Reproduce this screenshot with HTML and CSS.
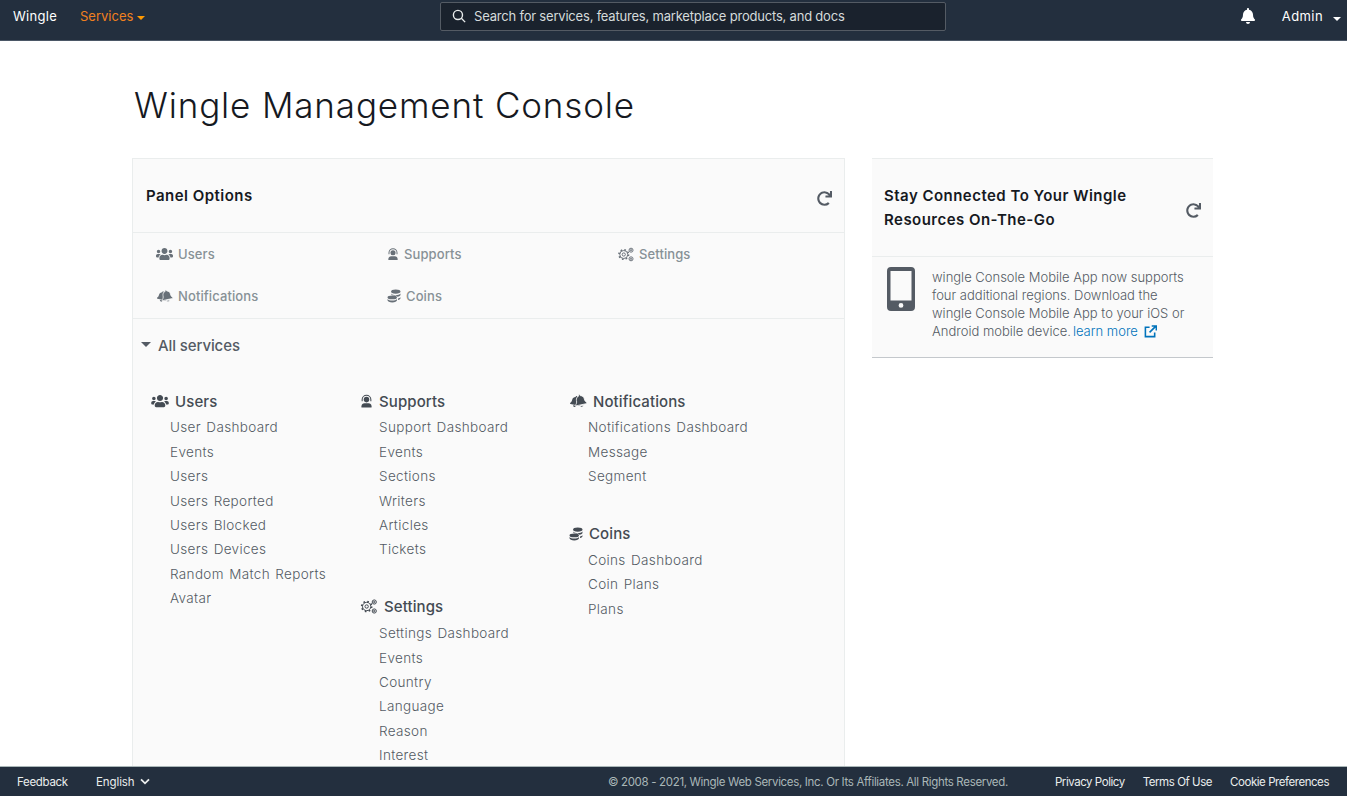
FILE: index.html
```html
<!DOCTYPE html>
<html lang="en">
<head>
    <meta charset="UTF-8">
    <meta name="viewport" content="width=device-width, initial-scale=1.0">
    <title>Wingle Management Console</title>
    <link rel="stylesheet" href="styles.css">
</head>
<body>
    <!-- Shared icons -->
    <svg class="icon-defs" aria-hidden="true">
        <symbol id="i-users" viewBox="0 0 640 512"><path d="M96 224c35.3 0 64-28.7 64-64s-28.7-64-64-64-64 28.7-64 64 28.7 64 64 64zm448 0c35.3 0 64-28.7 64-64s-28.7-64-64-64-64 28.7-64 64 28.7 64 64 64zm32 32h-64c-17.6 0-33.5 7.1-45.1 18.6 40.3 22.1 68.9 62 75.1 109.4h66c17.7 0 32-14.3 32-32v-32c0-35.3-28.7-64-64-64zm-256 0c61.9 0 112-50.1 112-112S381.9 32 320 32 208 82.1 208 144s50.1 112 112 112zm76.8 32h-8.3c-20.8 10-43.9 16-68.5 16s-47.6-6-68.5-16h-8.3C179.6 288 128 339.6 128 403.2V432c0 26.5 21.5 48 48 48h288c26.5 0 48-21.5 48-48v-28.8c0-63.6-51.6-115.2-115.2-115.2zm-223.7-13.4C161.5 263.1 145.6 256 128 256H64c-35.3 0-64 28.7-64 64v32c0 17.7 14.3 32 32 32h65.9c6.3-47.4 34.9-87.3 75.2-109.4z"/></symbol>
        <symbol id="i-bell" viewBox="0 0 448 512"><path d="M224 512c35.32 0 63.97-28.65 63.97-64H160.03c0 35.35 28.65 64 63.97 64zm215.39-149.71c-19.32-20.76-55.47-51.99-55.47-154.29 0-77.7-54.48-139.9-127.94-155.16V32c0-17.67-14.32-32-31.98-32s-31.98 14.33-31.98 32v20.84C118.56 68.1 64.08 130.3 64.08 208c0 102.3-36.15 133.53-55.47 154.29-6 6.45-8.66 14.16-8.61 21.71.11 16.4 12.98 32 32.1 32h383.8c19.12 0 32-15.6 32.1-32 .05-7.55-2.61-15.27-8.61-21.71z"/></symbol>
        <symbol id="i-redo" viewBox="0 0 512 512"><path d="M500.33 0h-47.41a12 12 0 0 0-12 12.57l4 82.76A247.42 247.42 0 0 0 256 8C119.34 8 7.9 119.53 8 256.19 8.1 393.07 119.1 504 256 504a247.1 247.1 0 0 0 166.18-63.91 12 12 0 0 0 .48-17.43l-34-34a12 12 0 0 0-16.38-.55A176 176 0 1 1 402.1 157.8l-101.53-4.87a12 12 0 0 0-12.57 12v47.41a12 12 0 0 0 12 12h200.33a12 12 0 0 0 12-12V12a12 12 0 0 0-12-12z"/></symbol>
        <symbol id="i-headset" viewBox="0 0 16 16">
            <path d="M8 0.3a6 6 0 0 0-6 6v2h1.300v-2a4.700 4.700 0 0 1 9.400 0v2H14v-2a6 6 0 0 0-6-6z"/>
            <circle cx="8" cy="6.300" r="3.400"/>
            <path d="M1.800 16v-1.400c0-2.200 1.700-3.700 3.700-3.700h5c2 0 3.700 1.500 3.700 3.700V16z"/>
        </symbol>
        <path id="i-bell-path" d="M224 512c35.32 0 63.97-28.65 63.97-64H160.03c0 35.35 28.65 64 63.97 64zm215.39-149.71c-19.32-20.76-55.47-51.99-55.47-154.29 0-77.7-54.48-139.9-127.94-155.16V32c0-17.67-14.32-32-31.98-32s-31.98 14.33-31.98 32v20.84C118.56 68.1 64.08 130.3 64.08 208c0 102.3-36.15 133.53-55.47 154.29-6 6.45-8.66 14.16-8.61 21.71.11 16.4 12.98 32 32.1 32h383.8c19.12 0 32-15.6 32.1-32 .05-7.55-2.61-15.27-8.61-21.71z"/>
        <symbol id="i-bells" viewBox="0 0 18 14">
            <g transform="translate(1.500 1.800) rotate(12 5 5.600) scale(.022)"><use href="#i-bell-path"/></g>
            <g transform="translate(6 0.400) rotate(-12 5.600 6.400) scale(.025)"><use href="#i-bell-path" stroke="#fafafa" stroke-width="30"/></g>
        </symbol>
        <symbol id="i-coins" viewBox="0 0 16 16">
            <ellipse cx="10" cy="2.900" rx="5.400" ry="2.400"/>
            <path d="M4.600 5.200c.9 1.200 3 1.800 5.400 1.800s4.500-.6 5.400-1.800v1.400c0 1-1.400 1.900-3.400 2.200-.8-.7-2.200-1.200-3.900-1.300-2.400-.2-3.500-.9-3.500-2.300z"/>
            <ellipse cx="6" cy="9.600" rx="5.400" ry="2.200"/>
            <path d="M.6 11.400c.9 1.200 3 1.800 5.400 1.800s4.500-.6 5.400-1.800v1.400c0 1.400-2.400 2.600-5.400 2.600S.6 14.200.6 12.800z"/>
            <path d="M12.600 10.800c1.300-.3 2.200-.8 2.800-1.500v1.400c0 .8-1 1.500-2.800 2z"/>
        </symbol>
        <symbol id="i-cogs" viewBox="0 0 20 18">
            <g fill="none" stroke="currentColor" stroke-width="1.200">
                <circle cx="7.200" cy="9" r="5"/>
                <circle cx="7.200" cy="9" r="6" stroke-dasharray="2 2.710" stroke-width="2"/>
                <circle cx="7.200" cy="9" r="2"/>
                <circle cx="16.300" cy="3.600" r="2.500"/>
                <circle cx="16.300" cy="3.600" r=".8"/>
                <circle cx="16.300" cy="14.400" r="2.500"/>
                <circle cx="16.300" cy="14.400" r=".8"/>
            </g>
        </symbol>
    </svg>

    <header class="topbar">
        <a class="brand">Wingle</a>
        <a class="services">Services<span class="caret"></span></a>
        <div class="search">
            <svg class="search-icon" viewBox="0 0 16 16"><circle cx="6.800" cy="6.800" r="5.200"/><path d="M10.700 10.700L15 15"/></svg>
            <span>Search for services, features, marketplace products, and docs</span>
        </div>
        <div class="topbar-right">
            <svg class="bell"><use href="#i-bell"/></svg>
            <a class="admin">Admin<span class="caret caret-white"></span></a>
        </div>
    </header>

    <main class="content">
        <h1 class="page-title">Wingle Management Console</h1>
        <div class="panels">
            <section class="panel panel-main">
                <div class="panel-head">
                    <h2>Panel Options</h2>
                    <svg class="refresh"><use href="#i-redo"/></svg>
                </div>
                <div class="options">
                    <div class="option"><svg class="ic ic-users"><use href="#i-users"/></svg>Users</div>
                    <div class="option"><svg class="ic ic-head"><use href="#i-headset"/></svg>Supports</div>
                    <div class="option"><svg class="ic ic-cogs"><use href="#i-cogs"/></svg>Settings</div>
                    <div class="option"><svg class="ic ic-users"><use href="#i-bells"/></svg>Notifications</div>
                    <div class="option"><svg class="ic ic-coins"><use href="#i-coins"/></svg>Coins</div>
                </div>
                <div class="all-services"><span class="caret caret-grey"></span>All services</div>
                <div class="services-grid">
                    <div class="service-col">
                        <div class="group">
                            <h3><svg class="ic ic-users"><use href="#i-users"/></svg>Users</h3>
                            <ul>
                                <li>User Dashboard</li>
                                <li>Events</li>
                                <li>Users</li>
                                <li>Users Reported</li>
                                <li>Users Blocked</li>
                                <li>Users Devices</li>
                                <li>Random Match Reports</li>
                                <li>Avatar</li>
                            </ul>
                        </div>
                    </div>
                    <div class="service-col">
                        <div class="group">
                            <h3><svg class="ic ic-head"><use href="#i-headset"/></svg>Supports</h3>
                            <ul>
                                <li>Support Dashboard</li>
                                <li>Events</li>
                                <li>Sections</li>
                                <li>Writers</li>
                                <li>Articles</li>
                                <li>Tickets</li>
                            </ul>
                        </div>
                        <div class="group">
                            <h3><svg class="ic ic-cogs"><use href="#i-cogs"/></svg>Settings</h3>
                            <ul>
                                <li>Settings Dashboard</li>
                                <li>Events</li>
                                <li>Country</li>
                                <li>Language</li>
                                <li>Reason</li>
                                <li>Interest</li>
                            </ul>
                        </div>
                    </div>
                    <div class="service-col">
                        <div class="group">
                            <h3><svg class="ic ic-users"><use href="#i-bells"/></svg>Notifications</h3>
                            <ul>
                                <li>Notifications Dashboard</li>
                                <li>Message</li>
                                <li>Segment</li>
                            </ul>
                        </div>
                        <div class="group">
                            <h3><svg class="ic ic-coins"><use href="#i-coins"/></svg>Coins</h3>
                            <ul>
                                <li>Coins Dashboard</li>
                                <li>Coin Plans</li>
                                <li>Plans</li>
                            </ul>
                        </div>
                    </div>
                </div>
            </section>

            <aside class="panel panel-side">
                <div class="side-head">
                    <h2>Stay Connected To Your Wingle<br>Resources On-The-Go</h2>
                    <svg class="refresh"><use href="#i-redo"/></svg>
                </div>
                <div class="side-body">
                    <svg class="phone" viewBox="0 0 28 44">
                        <path fill-rule="evenodd" d="M4 0h20a4 4 0 0 1 4 4v36a4 4 0 0 1-4 4H4a4 4 0 0 1-4-4V4a4 4 0 0 1 4-4zM3.500 4v29.500h21V4zM14 36a2.400 2.400 0 1 0 0 4.800 2.400 2.400 0 0 0 0-4.800z"/>
                    </svg>
                    <p>wingle Console Mobile App now supports<br>four additional regions. Download the<br>wingle Console Mobile App to your iOS or<br>Android mobile device.<a class="learn">learn more<svg class="ext" viewBox="0 0 14 14"><path d="M6 2.500H1.500v10h10V8"/><path d="M6 8l6.500-6.500M8.300 1h5v5" /></svg></a></p>
                </div>
            </aside>
        </div>
    </main>

    <footer class="footer">
        <a class="feedback">Feedback</a>
        <a class="lang">English<svg class="chev" viewBox="0 0 10 7"><path d="M1 1.300l4 4 4-4"/></svg></a>
        <span class="copy">© 2008 - 2021, Wingle Web Services, Inc. Or Its Affiliates. All Rights Reserved.</span>
        <div class="footer-links">
            <a>Privacy Policy</a>
            <a>Terms Of Use</a>
            <a>Cookie Preferences</a>
        </div>
    </footer>
</body>
</html>
```

FILE: styles.css
```css
/* General Page Styles */
* {
    box-sizing: border-box;
}

html, body {
    height: 100%;
}

body {
    margin: 0;
    display: flex;
    flex-direction: column;
    overflow: hidden;
    font-family: Inter, 'Noto Sans', sans-serif;
    background: #fff;
    color: #545b64;
}

h1, h2, h3, p, ul {
    margin: 0;
    padding: 0;
}

ul {
    list-style: none;
}

.icon-defs {
    display: none;
}

svg {
    fill: currentColor;
    flex: none;
}

/* Top Bar */
.topbar {
    flex: none;
    height: 41px;
    display: flex;
    align-items: center;
    padding: 0 6px 8px 13px;
    background: #232f3e;
    border-bottom: 1px solid #4b5766;
    color: #fff;
    font-size: 13px;
}

.brand {
    width: 67px;
    letter-spacing: 0.3px;
}

.services {
    color: #f0801f;
    width: 360px;
    display: flex;
    align-items: center;
}

.caret {
    display: inline-block;
    margin-left: 4px;
    margin-top: 3px;
    border-style: solid;
    border-width: 4px 4px 0;
    border-color: #ff9900 transparent transparent;
}

.caret-white {
    border-top-color: #fff;
    margin-left: 10px;
    margin-top: 6px;
}

.caret-grey {
    border-width: 5px 5px 0;
    border-top-color: #545b64;
    margin: 0 7px 0 0;
    position: relative;
    top: -1px;
}

.search {
    width: 506px;
    height: 29px;
    display: flex;
    align-items: center;
    gap: 8px;
    padding-left: 11px;
    background: #1a222d;
    border: 1px solid #545b64;
    border-radius: 2px;
    color: #d5dbdb;
    font-size: 13px;
    letter-spacing: -0.2px;
}

.search-icon {
    width: 14px;
    height: 14px;
    fill: none;
    stroke: #eaeded;
    stroke-width: 1.600;
}

.topbar-right {
    margin-left: auto;
    display: flex;
    align-items: center;
}

.bell {
    width: 14px;
    height: 16px;
    margin-right: 27px;
}

.admin {
    display: flex;
    align-items: center;
    letter-spacing: 0.4px;
}

/* Page Content */
.content {
    flex: 1;
    min-height: 0;
    overflow: hidden;
    padding-left: 132px;
}

.page-title {
    font-size: 35px;
    font-weight: 300;
    line-height: 42px;
    letter-spacing: 0.85px;
    color: #16191f;
    padding: 43px 0 32px 2px;
}

.panels {
    display: flex;
    align-items: flex-start;
    gap: 27px;
}

.panel {
    background: #fafafa;
}

.panel-main {
    width: 713px;
    border: 1px solid #eaeded;
    padding-bottom: 40px;
}

.panel h2 {
    font-size: 15px;
    font-weight: 600;
    line-height: 24px;
    letter-spacing: 0.47px;
    color: #16191f;
}

.panel-head {
    height: 74px;
    display: flex;
    align-items: center;
    justify-content: space-between;
    padding: 0 12px 0 13px;
    border-bottom: 1px solid #eaeded;
}

.refresh {
    width: 15px;
    height: 15px;
    color: #545b64;
}

.panel-head .refresh {
    margin-top: 5px;
}

/* Panel Options */
.options {
    display: grid;
    grid-template-columns: repeat(3, 231px);
    grid-auto-rows: 42px;
    padding: 0 0 1px 23px;
    border-bottom: 1px solid #eaeded;
}

.option {
    display: flex;
    align-items: center;
    font-size: 13px;
    font-weight: 500;
    letter-spacing: 0.1px;
    color: #879196;
}

.option .ic {
    color: #687078;
}

.ic {
    height: 14px;
    margin-right: 5px;
}

.ic-users {
    width: 17px;
}

.ic-head {
    width: 12px;
}

.ic-coins {
    width: 14px;
}

.ic-cogs {
    width: 16px;
    height: 15px;
}

/* All Services */
.all-services {
    height: 52px;
    display: flex;
    align-items: center;
    padding-left: 8px;
    font-size: 15px;
    font-weight: 500;
    letter-spacing: -0.1px;
    color: #545b64;
}

.services-grid {
    display: flex;
    padding: 18px 0 0 18px;
}

.service-col {
    width: 209px;
}

.group {
    margin-bottom: 33px;
}

.group h3 {
    display: flex;
    align-items: center;
    height: 24px;
    margin-bottom: 2.400px;
    font-size: 15px;
    font-weight: 500;
    letter-spacing: 0.1px;
    color: #444b53;
}

.group h3 .ic {
    margin-right: 6px;
}

.group h3 .ic-users {
    width: 18px;
}

.group h3 .ic-head {
    width: 13px;
}

.group h3 .ic-cogs {
    width: 18px;
}

.group li {
    height: 24.4px;
    line-height: 24px;
    padding-left: 19px;
    font-size: 13.500px;
    font-weight: 350;
    letter-spacing: 0.35px;
    word-spacing: 1.200px;
    white-space: nowrap;
}

/* Side Panel */
.panel-side {
    width: 341px;
    border-top: 1px solid #eaeded;
    border-bottom: 1px solid #c4c8cc;
}

.side-head {
    height: 98px;
    display: flex;
    align-items: center;
    justify-content: space-between;
    padding: 0 12px;
    border-bottom: 1px solid #eaeded;
}

.side-head .refresh {
    margin-top: 5px;
}

.side-body {
    display: flex;
    gap: 17px;
    height: 100px;
    padding: 12px 12px 0 15px;
}

.phone {
    width: 28px;
    height: 44px;
    fill: #545b64;
    margin-top: -2px;
}

.side-body p {
    font-size: 13px;
    font-weight: 350;
    line-height: 18px;
    white-space: nowrap;
    margin-top: -1px;
}

.learn {
    margin-left: 2px;
    color: #0073bb;
}

.ext {
    width: 13px;
    height: 13px;
    margin-left: 6px;
    vertical-align: -2px;
    fill: none;
    stroke: #0073bb;
    stroke-width: 1.700;
}

/* Footer */
.footer {
    flex: none;
    height: 30px;
    display: flex;
    align-items: center;
    padding: 0 18px 0 17px;
    background: #232f3e;
    border-top: 1px solid #aab7b8;
    color: #eaeded;
    font-size: 11.500px;
}

.feedback {
    width: 79px;
    letter-spacing: -0.3px;
}

.lang {
    display: flex;
    align-items: center;
    gap: 5px;
    letter-spacing: -0.1px;
}

.chev {
    width: 10px;
    height: 7px;
    fill: none;
    stroke: #eaeded;
    stroke-width: 1.800;
}

.copy {
    margin-left: auto;
    color: #aab7b8;
    letter-spacing: -0.33px;
}

.footer-links {
    display: flex;
    gap: 18px;
    margin-left: 47px;
    letter-spacing: -0.45px;
}
```
